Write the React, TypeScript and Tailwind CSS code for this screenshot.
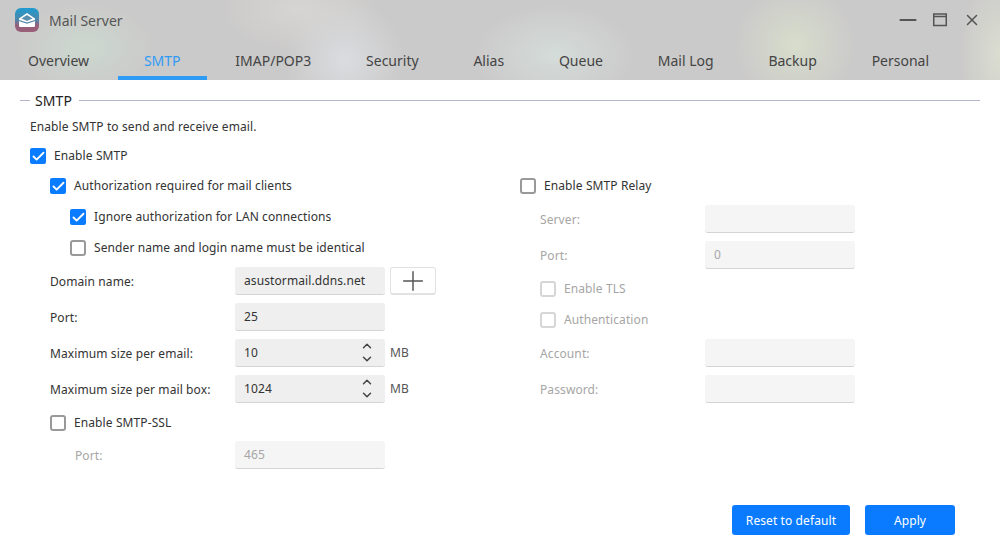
import { Check, ChevronDown, ChevronUp, Minus, Plus, X } from "lucide-react";
import type { ReactNode } from "react";

const TABS = ["Overview", "SMTP", "IMAP/POP3", "Security", "Alias", "Queue", "Mail Log", "Backup", "Personal"];

function AppIcon() {
  return (
    <svg width="24" height="24" viewBox="0 0 24 24">
      <defs>
        <linearGradient id="mailIcon" x1="0" y1="0" x2="0" y2="1">
          <stop offset="0" stopColor="#1f9bd0" />
          <stop offset="0.5" stopColor="#4f86a8" />
          <stop offset="0.72" stopColor="#94607c" />
          <stop offset="1" stopColor="#9a5f78" />
        </linearGradient>
      </defs>
      <rect width="24" height="24" rx="6" fill="url(#mailIcon)" />
      <path d="M4 10.5 12 5l8 5.5V18a1 1 0 0 1-1 1H5a1 1 0 0 1-1-1z" fill="#fff" />
      <path d="M6.5 10.5 12 7l5.5 3.5L12 13z" fill="#5b8fb0" />
      <path d="M4 12.5 12 15l8-2.5" fill="none" stroke="#4f86a8" strokeWidth="1.2" />
    </svg>
  );
}

function CheckRow({
  label,
  checked,
  disabled,
  className,
}: {
  label: string;
  checked?: boolean;
  disabled?: boolean;
  className?: string;
}) {
  return (
    <div className={`flex h-4 items-center gap-2 ${className ?? ""}`}>
      {checked ? (
        <span className="flex h-4 w-4 shrink-0 items-center justify-center rounded-[2px] bg-[#0a7cff]">
          <Check size={15} strokeWidth={3} className="text-white" />
        </span>
      ) : (
        <span
          className={`h-4 w-4 shrink-0 rounded-[3px] border-2 ${disabled ? "border-[#d6d6d6]" : "border-[#999999]"}`}
        />
      )}
      <span className={disabled ? "text-[#a6a6a6]" : "text-[#333333]"}>{label}</span>
    </div>
  );
}

function Input({ value, disabled, spin }: { value?: string; disabled?: boolean; spin?: boolean }) {
  return (
    <div
      className={`flex h-7 w-[150px] shrink-0 items-center justify-between rounded-[3px] border-b border-[#d4d4d4] pl-[9px] pr-[11px] ${
        disabled ? "bg-[#f5f5f5] text-[#a6a6a6]" : "bg-[#efefef] text-[#333333]"
      }`}
    >
      <span className="pt-px">{value}</span>
      {spin && (
        <span className="flex flex-col text-[#444444]">
          <ChevronUp size={14} strokeWidth={2.5} className="-mb-px" />
          <ChevronDown size={14} strokeWidth={2.5} />
        </span>
      )}
    </div>
  );
}

function Field({
  label,
  labelWidth,
  disabled,
  children,
  className,
}: {
  label: string;
  labelWidth: string;
  disabled?: boolean;
  children: ReactNode;
  className?: string;
}) {
  return (
    <div className={`flex h-7 items-center ${className ?? ""}`}>
      <span className={`${labelWidth} shrink-0 pt-px ${disabled ? "text-[#a6a6a6]" : "text-[#333333]"}`}>{label}</span>
      {children}
    </div>
  );
}

export default function App() {
  return (
    <div className="flex h-[550px] w-[1000px] flex-col overflow-hidden bg-white font-['Noto_Sans',sans-serif] text-[12px] tracking-[0.1px]">
      <div className="h-20 shrink-0 bg-[radial-gradient(ellipse_70px_45px_at_85px_48px,#ccd8cf,transparent),radial-gradient(ellipse_60px_60px_at_345px_60px,#dadcdf,transparent),radial-gradient(ellipse_80px_50px_at_555px_55px,#d4dcd9,transparent),radial-gradient(ellipse_60px_60px_at_795px_45px,#d7ddcb,transparent),radial-gradient(ellipse_40px_80px_at_1000px_55px,#dbddd0,transparent),radial-gradient(ellipse_80px_40px_at_300px_10px,#d7d5d2,transparent),linear-gradient(#cbcaca,#cbcaca)]">
        <div className="flex h-10 items-center pl-[15px] pr-[19px]">
          <AppIcon />
          <span className="ml-2.5 text-[14px] tracking-normal text-[#555555]">Mail Server</span>
          <div className="ml-auto flex items-center text-[#555555]">
            <Minus size={26} strokeWidth={1.8} />
            <svg width="16" height="14" viewBox="0 0 16 14" className="ml-[11px]">
              <rect x="1.75" y="1" width="12.5" height="11.5" fill="none" stroke="currentColor" strokeWidth="1.5" />
              <path d="M1.75 3.5h12.5" stroke="currentColor" strokeWidth="1.5" />
            </svg>
            <X size={18} strokeWidth={2} className="ml-[15px]" />
          </div>
        </div>
        <div className="flex h-10 gap-[2.8px] pl-[2px]">
          {TABS.map((t) => (
            <div
              key={t}
              className={`flex items-center border-b-4 px-[26px] pt-1 text-[14px] tracking-normal ${
                t === "SMTP" ? "border-[#2e9bf5] text-[#2e9bf5]" : "border-transparent text-[#444444]"
              }`}
            >
              {t}
            </div>
          ))}
        </div>
      </div>

      <div className="relative flex-1 px-[30px] pt-[11px]">
        <div className="-ml-2.5 flex h-[18px] items-center">
          <span className="h-px w-[10px] bg-[#b3b5cc]" />
          <span className="pl-[5px] pr-[7px] text-[14px] text-[#222222]">SMTP</span>
          <span className="-mr-[10px] h-px flex-1 bg-[#b3b5cc]" />
        </div>
        <div className="mt-[9px] leading-[18px] text-[#333333]">Enable SMTP to send and receive email.</div>
        <CheckRow label="Enable SMTP" checked className="mt-3" />

        <div className="mt-[14px] flex">
          <div className="w-[490px] pl-5">
            <CheckRow label="Authorization required for mail clients" checked />
            <CheckRow label="Ignore authorization for LAN connections" checked className="ml-5 mt-[15px]" />
            <CheckRow label="Sender name and login name must be identical" className="ml-5 mt-[15px]" />
            <Field label="Domain name:" labelWidth="w-[185px]" className="mt-[11px]">
              <Input value="asustormail.ddns.net" />
              <div className="ml-[5px] flex h-7 w-[46px] items-center justify-center rounded-[3px] border border-b-2 border-[#e2e2e2] bg-white text-[#555555]">
                <Plus size={32} strokeWidth={1.1} />
              </div>
            </Field>
            <Field label="Port:" labelWidth="w-[185px]" className="mt-2">
              <Input value="25" />
            </Field>
            <Field label="Maximum size per email:" labelWidth="w-[185px]" className="mt-2">
              <Input value="10" spin />
              <span className="ml-[5px] text-[#555555]">MB</span>
            </Field>
            <Field label="Maximum size per mail box:" labelWidth="w-[185px]" className="mt-2">
              <Input value="1024" spin />
              <span className="ml-[5px] text-[#555555]">MB</span>
            </Field>
            <CheckRow label="Enable SMTP-SSL" className="mt-3" />
            <Field label="Port:" labelWidth="w-[160px]" disabled className="ml-[25px] mt-2.5">
              <Input value="465" disabled />
            </Field>
          </div>

          <div>
            <CheckRow label="Enable SMTP Relay" />
            <div className="pl-5">
              <Field label="Server:" labelWidth="w-[165px]" disabled className="mt-[11px]">
                <Input disabled />
              </Field>
              <Field label="Port:" labelWidth="w-[165px]" disabled className="mt-2">
                <Input value="0" disabled />
              </Field>
              <CheckRow label="Enable TLS" disabled className="mt-3" />
              <CheckRow label="Authentication" disabled className="mt-[15px]" />
              <Field label="Account:" labelWidth="w-[165px]" disabled className="mt-[11px]">
                <Input disabled />
              </Field>
              <Field label="Password:" labelWidth="w-[165px]" disabled className="mt-2">
                <Input disabled />
              </Field>
            </div>
          </div>
        </div>

        <div className="absolute bottom-[15px] right-[45px] flex gap-[15px] text-white">
          <button type="button" className="h-[30px] w-[118px] rounded-[3px] bg-[#0a7bff] pt-px">
            Reset to default
          </button>
          <button type="button" className="h-[30px] w-[90px] rounded-[3px] bg-[#0a7bff] pt-px">
            Apply
          </button>
        </div>
      </div>
    </div>
  );
}
